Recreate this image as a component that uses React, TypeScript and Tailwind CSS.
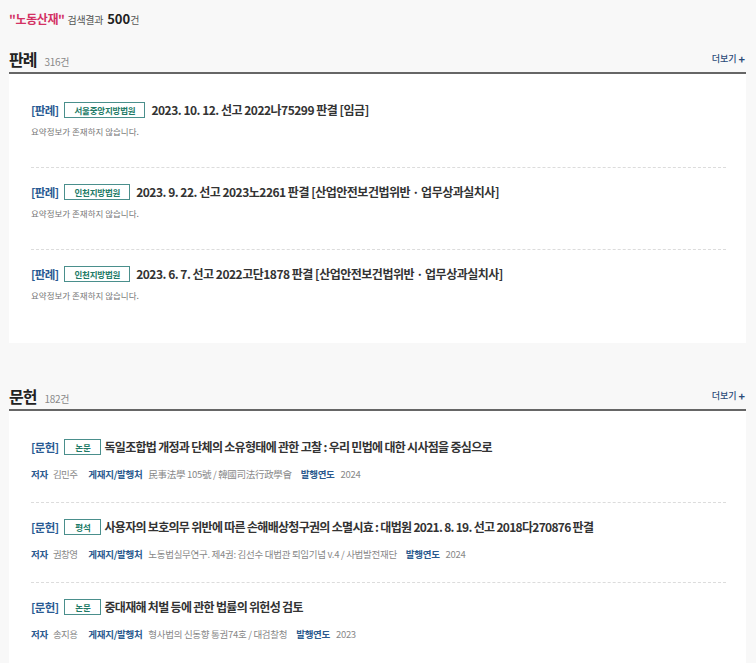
import React from "react";

const font = { fontFamily: '"Noto Sans CJK KR", "Noto Sans", sans-serif' };

type Case = { court: string; title: string };
const cases: Case[] = [
  { court: "서울중앙지방법원", title: "2023. 10. 12. 선고 2022나75299 판결 [임금]" },
  { court: "인천지방법원", title: "2023. 9. 22. 선고 2023노2261 판결 [산업안전보건법위반 · 업무상과실치사]" },
  { court: "인천지방법원", title: "2023. 6. 7. 선고 2022고단1878 판결 [산업안전보건법위반 · 업무상과실치사]" },
];

type Doc = { kind: string; title: string; author: string; pub: string; year: string };
const docs: Doc[] = [
  { kind: "논문", title: "독일조합법 개정과 단체의 소유형태에 관한 고찰 : 우리 민법에 대한 시사점을 중심으로", author: "김민주", pub: "民事法學 105號 / 韓國司法行政學會", year: "2024" },
  { kind: "평석", title: "사용자의 보호의무 위반에 따른 손해배상청구권의 소멸시효 : 대법원 2021. 8. 19. 선고 2018다270876 판결", author: "권창영", pub: "노동법실무연구. 제4권: 김선수 대법관 퇴임기념 v.4 / 사법발전재단", year: "2024" },
  { kind: "논문", title: "중대재해 처벌 등에 관한 법률의 위헌성 검토", author: "송지용", pub: "형사법의 신동향 통권74호 / 대검찰청", year: "2023" },
];

function SectionHeader({ title, count }: { title: string; count: string }) {
  return (
    <div className="flex items-center justify-between h-[26px] pb-[2px] border-b-2 border-[#666]">
      <div className="flex items-baseline gap-[8px]">
        <span className="text-[16px] font-bold text-[#222] leading-6 tracking-[-1px]">{title}</span>
        <span className="text-[10px] text-[#888] tracking-[-0.3px]">{count}</span>
      </div>
      <div className="flex items-center gap-[2px] text-[9px] text-[#2b4a78] font-medium pr-[1px]">
        <span>더보기</span>
        <span className="font-bold text-[11px] leading-none">+</span>
      </div>
    </div>
  );
}

function Tag({ label }: { label: string }) {
  return <span className="text-[11.5px] font-bold text-[#285a93] leading-4 tracking-[-0.6px]">[{label}]</span>;
}

function Badge({ text, wide }: { text: string; wide?: boolean }) {
  return (
    <span
      className={`inline-flex items-center justify-center h-4 border border-[#4a8f8c] text-[8.5px] font-bold text-[#217a66] leading-none tracking-[-0.2px] ${
        wide ? "px-[9px]" : "w-[37px]"
      }`}
    >
      {text}
    </span>
  );
}

export default function App() {
  return (
    <div style={font} className="min-h-[663px] w-full bg-[#f8f8f8] pl-[9px] pr-[10px] pt-[11px] overflow-hidden">
      <div className="flex items-baseline h-4 leading-4">
        <span className="text-[12px] font-bold text-[#d33264] tracking-[-0.4px]">"노동산재"</span>
        <span className="ml-[3px] text-[10px] text-[#555] tracking-[-0.3px]">검색결과</span>
        <span className="ml-[4px] text-[13px] font-bold text-[#222]">500</span>
        <span className="text-[10px] text-[#555]">건</span>
      </div>

      <div className="mt-[21px]">
        <SectionHeader title="판례" count="316건" />
        <div className="bg-white pl-[22px] pr-[20px] py-3">
          {cases.map((c, i) => (
            <div
              key={i}
              className={`pt-4 pb-[29px] ${i < cases.length - 1 ? "border-b border-dashed border-[#dcdcdc]" : ""}`}
            >
              <div className="flex items-center h-4 gap-[6px]">
                <Tag label="판례" />
                <Badge text={c.court} wide />
                <span className="text-[12px] font-bold text-[#333] leading-4 tracking-[-0.5px]">{c.title}</span>
              </div>
              <div className="mt-[6px] text-[8.5px] leading-[14px] text-[#777]">요약정보가 존재하지 않습니다.</div>
            </div>
          ))}
        </div>
      </div>

      <div className="mt-[42px]">
        <SectionHeader title="문헌" count="182건" />
        <div className="bg-white pl-[22px] pr-[20px] py-3">
          {docs.map((d, i) => (
            <div
              key={i}
              className={`pt-4 pb-[21px] ${i < docs.length - 1 ? "border-b border-dashed border-[#dcdcdc]" : ""}`}
            >
              <div className="flex items-center h-4 gap-[6px]">
                <Tag label="문헌" />
                <Badge text={d.kind} />
                <span className="-ml-[3px] text-[12px] font-bold text-[#333] leading-4 tracking-[-0.7px]">{d.title}</span>
              </div>
              <div className="mt-3 flex items-center h-[14px] text-[9.5px] leading-[14px] tracking-[-0.3px]">
                <span className="font-bold text-[#2b5a8e]">저자</span>
                <span className="ml-[5px] text-[#888] tracking-[-0.6px]">{d.author}</span>
                <span className="ml-[11px] font-bold text-[#2b5a8e]">게재지/발행처</span>
                <span className="ml-[6px] text-[#888]">{d.pub}</span>
                <span className="ml-[9px] font-bold text-[#2b5a8e]">발행연도</span>
                <span className="ml-[6px] text-[#888]">{d.year}</span>
              </div>
            </div>
          ))}
        </div>
      </div>
    </div>
  );
}
